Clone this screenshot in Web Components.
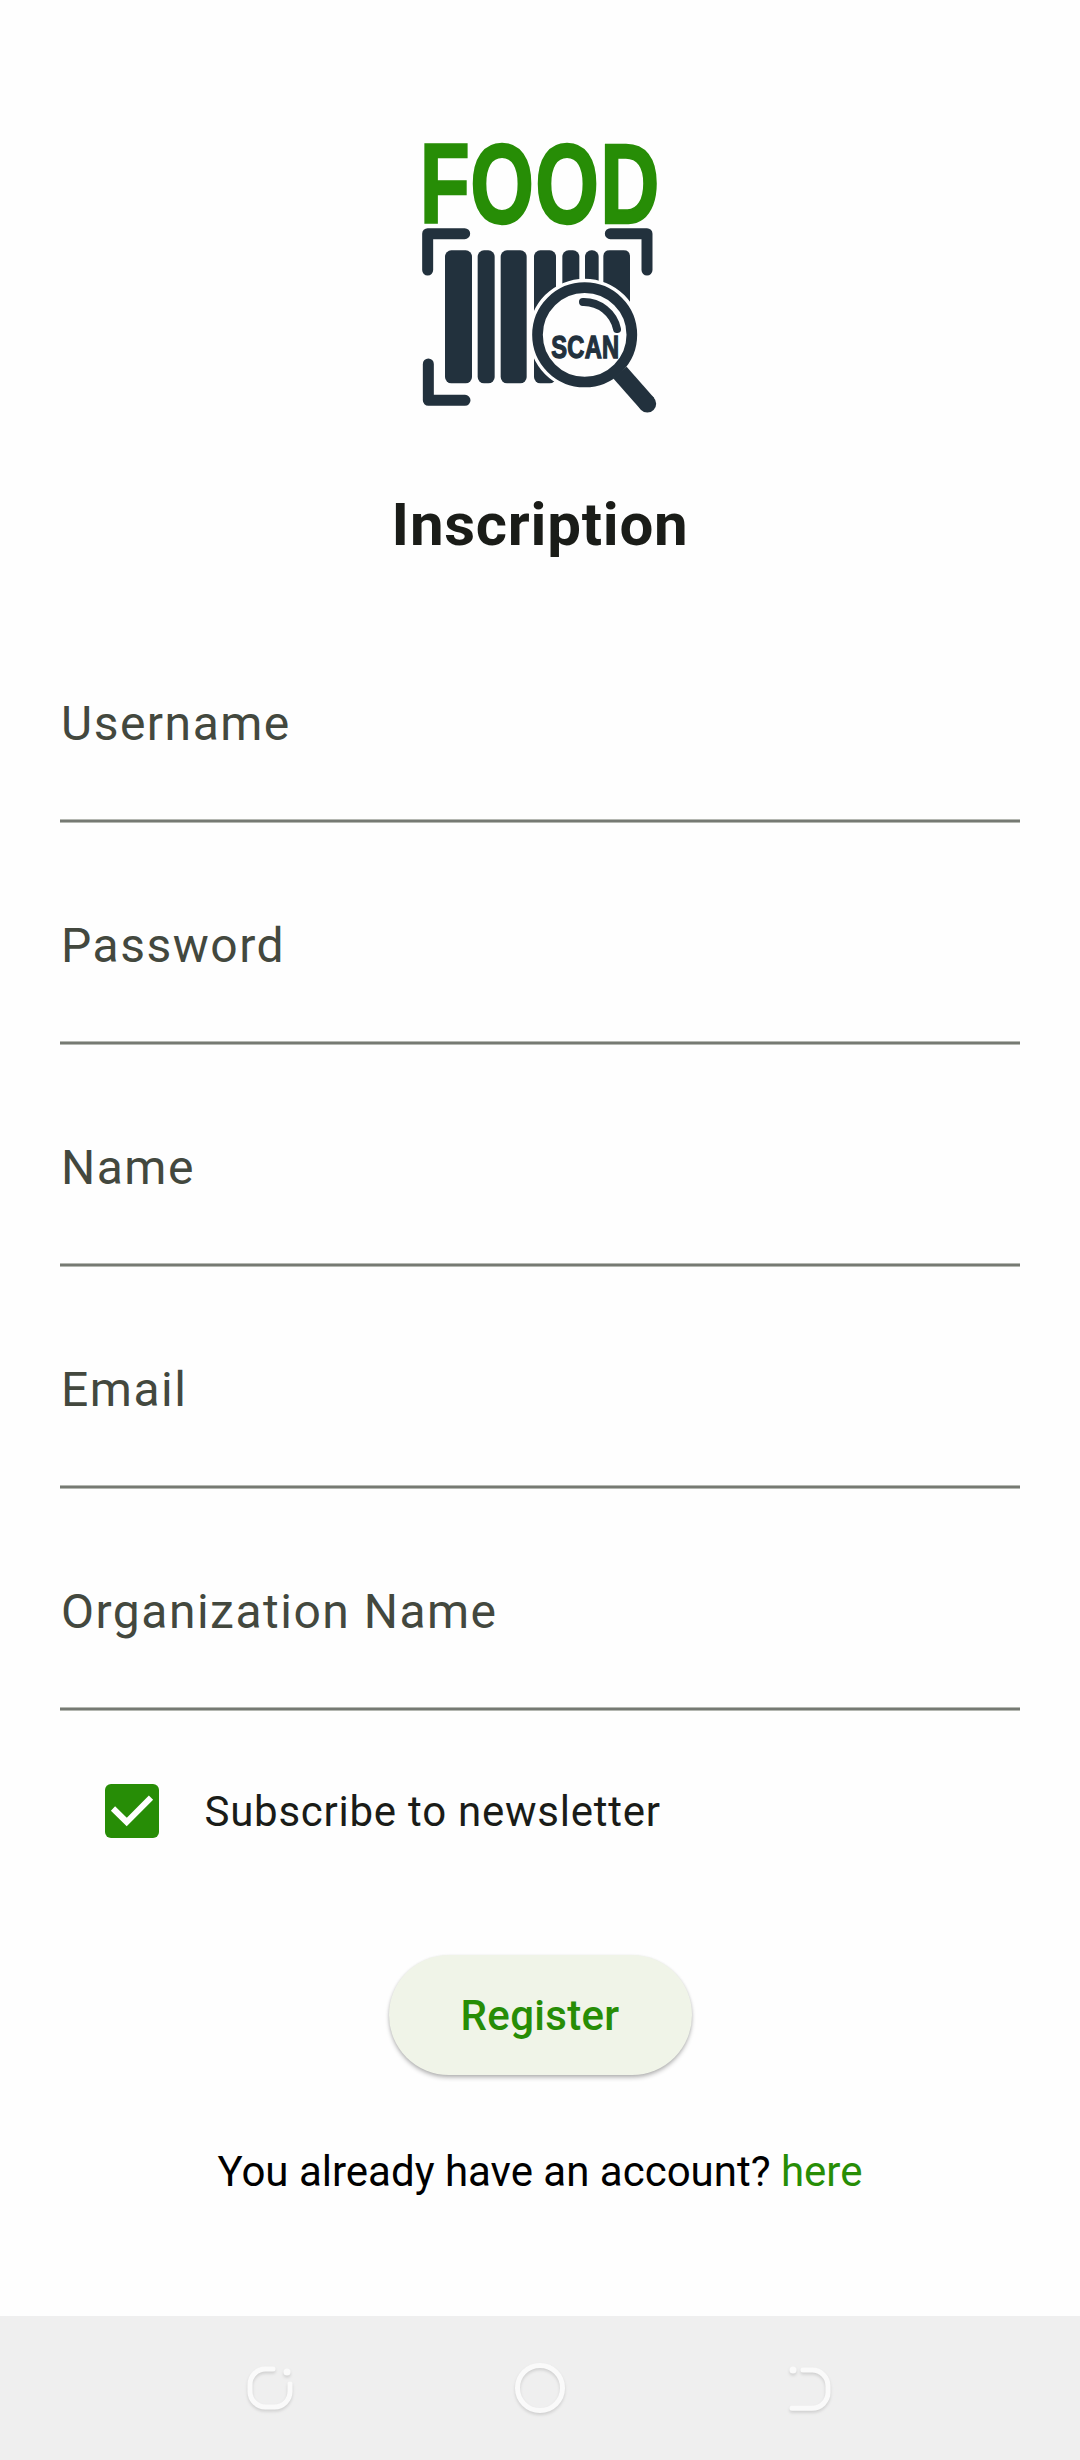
<!DOCTYPE html>
<html lang="fr">
<head>
<meta charset="utf-8">
<title>Inscription</title>
<style>
html,body{margin:0;padding:0;background:#fefefe}
body{font-family:Roboto,"Noto Sans",sans-serif;color:#1a1c18}
</style>
</head>
<body>
<register-screen>
  <food-logo></food-logo>
  <page-title>Inscription</page-title>
  <form-list>
    <text-entry>Username</text-entry>
    <text-entry>Password</text-entry>
    <text-entry>Name</text-entry>
    <text-entry>Email</text-entry>
    <text-entry>Organization Name</text-entry>
  </form-list>
  <check-row>Subscribe to newsletter</check-row>
  <pill-button>Register</pill-button>
  <account-hint>You already have an account? <span slot="link">here</span></account-hint>
  <system-nav slot="nav"></system-nav>
</register-screen>
<script>
const define = (name, html) => customElements.define(name, class extends HTMLElement {
  constructor() {
    super();
    this.attachShadow({ mode: 'open' }).innerHTML = html;
  }
});

define('register-screen', `
<style>
:host{display:flex;flex-direction:column;height:2460px;width:1080px;overflow:hidden}
main{flex:1;display:flex;flex-direction:column;align-items:center;padding:100px 60px 0}
</style>
<main><slot></slot></main><slot name="nav"></slot>`);

define('food-logo', `
<style>
:host{display:block;width:280px;height:320px}
svg{display:block;overflow:visible}
text{font-family:"Liberation Sans",Arial,sans-serif;font-weight:700;stroke-linejoin:miter}
</style>
<svg width="280" height="320" viewBox="0 -90 840 960">
  <defs><clipPath id="bars"><path clip-rule="evenodd" d="M0 0H840V870H0ZM386 614a168 168 0 1 0 336 0a168 168 0 1 0 -336 0Z"/></clipPath></defs>
  <text transform="translate(59 280) scale(.722 1)" dx="0 -4" letter-spacing="6" font-size="340" fill="#278d06" stroke="#278d06" stroke-width="7">FOOD</text>
  <g fill="none" stroke="#22313d" stroke-width="33" stroke-linecap="round" stroke-linejoin="round">
    <path d="M194 311H83V420M631 311H741V420M85 702V811H195"/>
  </g>
  <g fill="#22313d" clip-path="url(#bars)">
    <rect x="135" y="361" width="81" height="399" rx="19"/>
    <rect x="233" y="361" width="51" height="399" rx="19"/>
    <rect x="302" y="361" width="78" height="399" rx="19"/>
    <rect x="402" y="361" width="66" height="399" rx="19"/>
    <rect x="487" y="361" width="51" height="300" rx="19"/>
    <rect x="555" y="361" width="41" height="300" rx="19"/>
    <path d="M610 380Q610 361 629 361H671Q690 361 690 380V520H610Z"/>
  </g>
  <circle cx="554" cy="614.500" r="141.500" fill="none" stroke="#22313d" stroke-width="32"/>
  <path d="M660 728L742 821" stroke="#22313d" stroke-width="53" fill="none"/>
  <circle cx="742" cy="821" r="26.500" fill="#22313d"/>
  <path d="M549 516A102 102 0 0 1 651 597" fill="none" stroke="#22313d" stroke-width="24" stroke-linecap="round"/>
  <text transform="translate(454 683) scale(.74 1)" font-size="96" letter-spacing="1" fill="#22313d" stroke="#22313d" stroke-width="4">SCAN</text>
</svg>`);

define('page-title', `
<style>
:host{display:block;margin-top:69px;height:72px}
h1{margin:0;font-size:60px;line-height:72px;font-weight:700;letter-spacing:.75px}
</style><h1><slot></slot></h1>`);

define('form-list', `
<style>:host{display:flex;flex-direction:column;width:100%;margin-top:40px}</style><slot></slot>`);

define('text-entry', `
<style>
:host{display:flex;flex-direction:column;justify-content:space-between;box-sizing:border-box;height:222px;padding-top:87px}
.label{padding-left:1px;font-size:48px;line-height:72px;letter-spacing:1.5px;color:#43483e}
.line{height:4px;background:linear-gradient(#b5b8b2 0 1px,#767a73 1px 3px,#b5b8b2 3px)}
</style><div class="label"><slot></slot></div><div class="line"></div>`);

define('check-row', `
<style>
:host{display:flex;align-items:center;align-self:stretch;height:120px;margin-top:40px;padding-left:45px;gap:45.5px;font-size:42px;letter-spacing:.75px}
svg{display:block}
</style>
<svg width="54" height="54" viewBox="0 0 54 54"><rect width="54" height="54" rx="6" fill="#278d06"/><path d="M8 24.500L21.700 38L46 13.700" fill="none" stroke="#fff" stroke-width="6"/></svg>
<span><slot></slot></span>`);

define('pill-button', `
<style>
:host{display:block;margin-top:84px}
button{display:flex;align-items:center;justify-content:center;width:303px;height:120px;padding:2px 0 0;border:0;border-radius:60px;background:#f0f4e8;color:#278d06;font:500 42px/60px Roboto,sans-serif;letter-spacing:.3px;box-shadow:0 3px 4px rgba(0,0,0,.22),0 1px 3px rgba(0,0,0,.12)}
</style><button><slot></slot></button>`);

define('account-hint', `
<style>
:host{display:block;margin-top:67px;font-size:42px;line-height:60px;color:#000;white-space:nowrap}
.link{color:#278d06}
</style><slot></slot><span class="link"><slot name="link"></slot></span>`);

define('system-nav', `
<style>
:host{display:flex;justify-content:center;align-items:center;gap:210px;height:144px;background:#efefef}
svg{display:block;filter:drop-shadow(0 2px 1.5px rgba(0,0,0,.13))}
</style>
<svg width="60" height="60" viewBox="0 0 60 60" fill="none" stroke="#fafafa" stroke-width="5" stroke-linecap="round"><path d="M33 11H26A15.500 15.500 0 0 0 10 26.500V33.500A15.500 15.500 0 0 0 26 49H34.500A15.500 15.500 0 0 0 50 33.500V26"/><circle cx="47" cy="14" r="3.500" fill="#fafafa" stroke="none"/></svg>
<svg width="60" height="60" viewBox="0 0 60 60" fill="none" stroke="#fafafa" stroke-width="5"><circle cx="30" cy="30" r="22.500"/></svg>
<svg width="60" height="60" viewBox="0 0 60 60" fill="none" stroke="#fafafa" stroke-width="5" stroke-linecap="round"><path d="M23 12H32A16 16 0 0 1 48 28V34.300A16 16 0 0 1 32 50.300H12"/><circle cx="13" cy="12" r="3.500" fill="#fafafa" stroke="none"/></svg>`);
</script>
</body>
</html>
